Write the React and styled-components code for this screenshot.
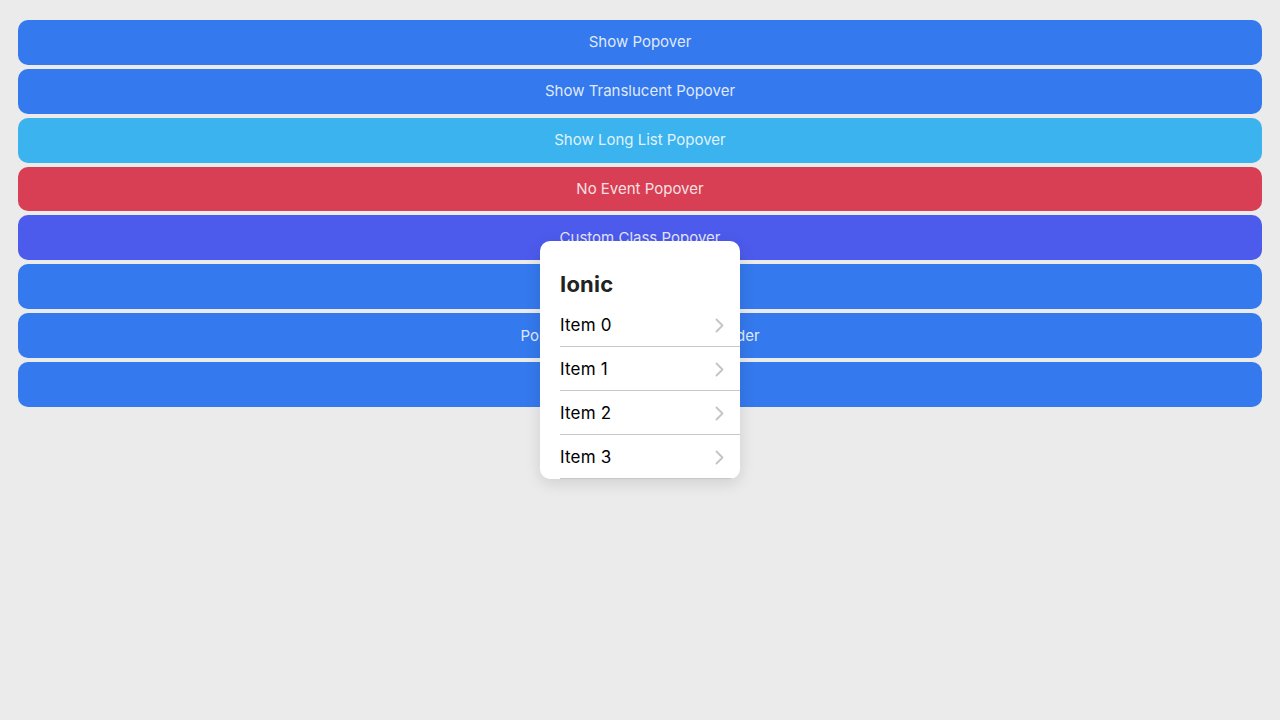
import React from "react";
import styled, { createGlobalStyle } from "styled-components";

const GlobalStyle = createGlobalStyle`
  html, body {
    margin: 0;
    padding: 0;
    background: #ebebeb;
    font-family: Inter, "Noto Sans", sans-serif;
  }
`;

const Page = styled.div`
  position: relative;
  width: 1280px;
  height: 720px;
  background: #ebebeb;
  padding: 16px;
  box-sizing: border-box;
`;

const ButtonList = styled.div`
  display: flex;
  flex-direction: column;
  gap: 4px;
  padding-top: 4px;
`;

const Button = styled.button`
  display: flex;
  align-items: center;
  justify-content: center;
  height: 44.86px;
  margin: 0 2px;
  padding: 0 0 1px;
  border: none;
  border-radius: 10px;
  background: ${(p) => p.$bg};
  color: rgba(255, 255, 255, 0.86);
  font-family: Inter, sans-serif;
  font-size: 15px;
`;

const Popover = styled.div`
  position: absolute;
  top: 241px;
  left: 50%;
  transform: translateX(-50%);
  width: 200px;
  height: 238px;
  border-radius: 10px;
  background: #fff;
  box-shadow: 0 4px 16px rgba(0, 0, 0, 0.12);
  overflow: hidden;
`;

const ListHeader = styled.div`
  padding: 29px 20px 5px;
  font-size: 22px;
  line-height: 28px;
  font-weight: 700;
  color: #222;
  letter-spacing: 0.2px;
`;

const Item = styled.div`
  display: flex;
  align-items: center;
  justify-content: space-between;
  margin-left: 20px;
  padding: 1px 16px 0 0;
  box-sizing: border-box;
  height: 44px;
  border-bottom: 1px solid #c8c7cc;
  font-size: 17px;
  color: #000;
  letter-spacing: 0.2px;
`;

const Chevron = () => (
  <svg width="9" height="15" viewBox="0 0 9 15">
    <path d="M1.5 1.5 L7.5 7.5 L1.5 13.5" fill="none" stroke="#c4c4c7" strokeWidth="1.8" strokeLinecap="round" strokeLinejoin="round" />
  </svg>
);

const buttons = [
  { label: "Show Popover", bg: "#3479ed" },
  { label: "Show Translucent Popover", bg: "#3479ed" },
  { label: "Show Long List Popover", bg: "#3bb3ee" },
  { label: "No Event Popover", bg: "#d83f54" },
  { label: "Custom Class Popover", bg: "#4c5bec" },
  { label: "Show Header Popover", bg: "#3479ed" },
  { label: "Popover With Translucent Header", bg: "#3479ed" },
  { label: "Show Popover In Modal", bg: "#3479ed" },
];

export default function App() {
  return (
    <Page>
      <GlobalStyle />
      <ButtonList>
        {buttons.map((b) => (
          <Button key={b.label} $bg={b.bg}>
            {b.label}
          </Button>
        ))}
      </ButtonList>
      <Popover>
        <ListHeader>Ionic</ListHeader>
        {[0, 1, 2, 3].map((i) => (
          <Item key={i}>
            <span>Item {i}</span>
            <Chevron />
          </Item>
        ))}
      </Popover>
    </Page>
  );
}
